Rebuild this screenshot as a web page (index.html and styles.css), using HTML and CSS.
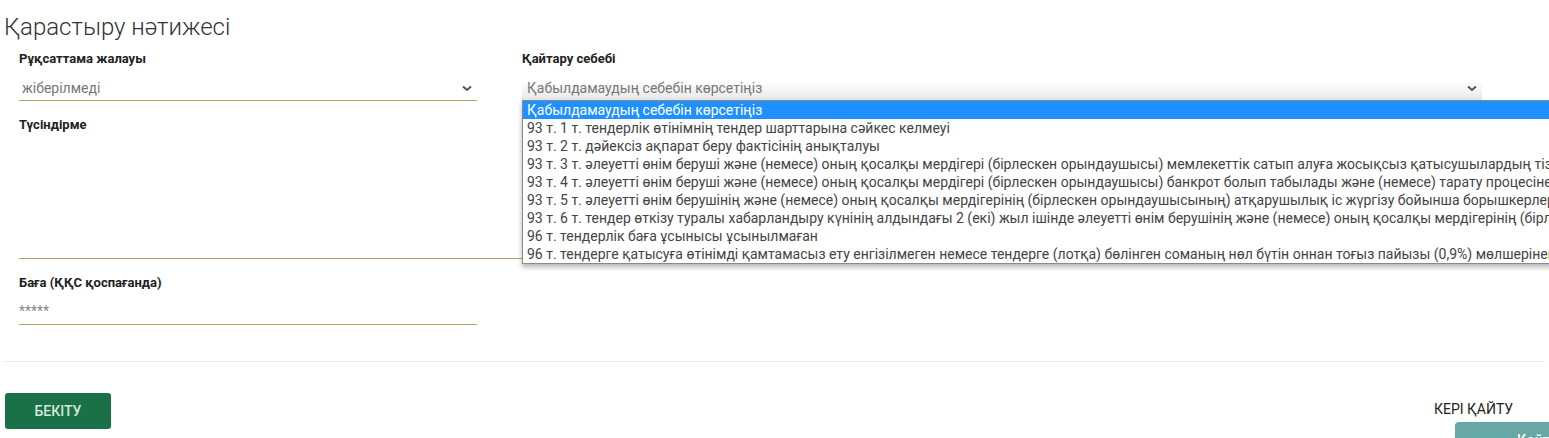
FILE: index.html
```html
<!DOCTYPE html>
<html lang="kk">
<head>
<meta charset="utf-8">
<title>Қарастыру нәтижесі</title>
<link rel="stylesheet" href="styles.css">
</head>
<body>
<div class="page">
  <h1 class="title">Қарастыру нәтижесі</h1>
  <div class="form">
    <div class="row">
      <div class="field">
        <div class="label">Рұқсаттама жалауы</div>
        <div class="select">
          <span class="select-text">жіберілмеді</span>
          <svg class="chev" width="10" height="7" viewBox="0 0 10 7"><polyline points="1,1.5 5,5 9,1.5" fill="none" stroke="#555" stroke-width="2"/></svg>
        </div>
      </div>
      <div class="field">
        <div class="label">Қайтару себебі</div>
        <div class="select select-open">
          <span class="select-text">Қабылдамаудың себебін көрсетіңіз</span>
          <svg class="chev" width="10" height="7" viewBox="0 0 10 7"><polyline points="1,1.5 5,5 9,1.5" fill="none" stroke="#555" stroke-width="2"/></svg>
          <ul class="dropdown">
            <li class="opt opt-active">Қабылдамаудың себебін көрсетіңіз</li>
            <li class="opt">93 т. 1 т. тендерлік өтінімнің тендер шарттарына сәйкес келмеуі</li>
            <li class="opt">93 т. 2 т. дәйексіз ақпарат беру фактісінің анықталуы</li>
            <li class="opt">93 т. 3 т. әлеуетті өнім беруші және (немесе) оның қосалқы мердігері (бірлескен орындаушысы) мемлекеттік сатып алуға жосықсыз қатысушылардың тізбесінде тұрады</li>
            <li class="opt">93 т. 4 т. әлеуетті өнім беруші және (немесе) оның қосалқы мердігері (бірлескен орындаушысы) банкрот болып табылады және (немесе) тарату процесіне ұшыраған</li>
            <li class="opt">93 т. 5 т. әлеуетті өнім берушінің және (немесе) оның қосалқы мердігерінің (бірлескен орындаушысының) атқарушылық іс жүргізу бойынша борышкерлердің бірыңғай тізілімінде болуы</li>
            <li class="opt">93 т. 6 т. тендер өткізу туралы хабарландыру күнінің алдындағы 2 (екі) жыл ішінде әлеуетті өнім берушінің және (немесе) оның қосалқы мердігерінің (бірлескен орындаушысының) болуы</li>
            <li class="opt">96 т. тендерлік баға ұсынысы ұсынылмаған</li>
            <li class="opt">96 т. тендерге қатысуға өтінімді қамтамасыз ету енгізілмеген немесе тендерге (лотқа) бөлінген соманың нөл бүтін оннан тоғыз пайызы (0,9%) мөлшерінен аз</li>
          </ul>
        </div>
      </div>
    </div>
    <div class="label label-gap">Түсіндірме</div>
    <div class="textarea"></div>
    <div class="label label-gap">Баға (ҚҚС қоспағанда)</div>
    <div class="input">*****</div>
  </div>
  <div class="separator"></div>
  <div class="footer">
    <button class="btn-primary">БЕКІТУ</button>
    <div class="footer-right">
      <span class="link">КЕРІ ҚАЙТУ</span>
      <button class="btn-teal">Қайтару</button>
    </div>
  </div>
</div>
</body>
</html>
```
FILE: styles.css
```css
html, body {
  margin: 0;
  padding: 0;
  overflow: hidden;
  background: #fff;
  font-family: Roboto, "Liberation Sans", Arial, sans-serif;
  color: #222;
}
.page {
  padding: 0 4px;
  height: 438px;
}
.title {
  margin: 12px 0 0;
  font-size: 24px;
  line-height: 30px;
  font-weight: 300;
  color: #333;
}
.form {
  padding: 0 15px;
  width: 1463px;
}
.row {
  display: grid;
  grid-template-columns: 458px 960px;
  column-gap: 45px;
  margin-top: 8px;
}
.label {
  font-size: 13px;
  line-height: 18px;
  font-weight: 700;
  color: #222;
}
.label-gap {
  margin-top: 15px;
}
.select {
  position: relative;
  display: flex;
  align-items: center;
  justify-content: space-between;
  padding: 10px 5px 2px 3px;
  border-bottom: 1px solid #b9a15f;
}
.select-text {
  font-size: 14px;
  line-height: 20px;
  color: #777;
}
.select-open {
  background: linear-gradient(#fff 0%, #fff 40%, #e8e8e8 100%);
  border-bottom-color: #555;
  padding-left: 5px;
}
.chev {
  display: block;
  margin-top: 1px;
}
.dropdown {
  position: absolute;
  left: 0;
  top: 100%;
  width: 1200px;
  margin: 0;
  padding: 0;
  list-style: none;
  background: #fff;
  border: 1px solid #8a8a8a;
  box-shadow: 0 3px 5px rgba(0, 0, 0, 0.3);
  z-index: 5;
}
.opt {
  font-size: 14px;
  line-height: 18px;
  height: 18px;
  padding-left: 4px;
  color: #444;
  white-space: nowrap;
  overflow: hidden;
}
.opt-active {
  background: #1e90ff;
  color: #fff;
}
.textarea {
  height: 124px;
  border-bottom: 1px solid #b9a15f;
}
.input {
  width: 458px;
  box-sizing: border-box;
  padding: 9px 0 3px;
  font-size: 14px;
  line-height: 20px;
  color: #888;
  border-bottom: 1px solid #b9a15f;
}
.separator {
  margin-top: 36px;
  height: 1px;
  background: #ececec;
}
.footer {
  display: flex;
  justify-content: space-between;
  align-items: flex-start;
  margin-top: 31px;
}
.btn-primary {
  margin-left: 1px;
  width: 106px;
  height: 36px;
  border: none;
  border-radius: 3px;
  background: #1a7047;
  color: #d6e8de;
  font-family: Roboto, "Liberation Sans", Arial, sans-serif;
  font-size: 14px;
  font-weight: 500;
  cursor: pointer;
}
.footer-right {
  width: 111px;
  display: flex;
  flex-direction: column;
  align-items: flex-start;
  margin-top: 6px;
}
.link {
  font-size: 14px;
  line-height: 20px;
  color: #222;
}
.btn-teal {
  margin-top: 3px;
  margin-left: 21px;
  flex: none;
  width: 160px;
  height: 36px;
  border: none;
  border-radius: 4px;
  background: #66a8a5;
  color: #fff;
  font-family: Roboto, "Liberation Sans", Arial, sans-serif;
  font-size: 14px;
  font-weight: 500;
  text-align: left;
  padding: 0 0 0 62px;
}
```
